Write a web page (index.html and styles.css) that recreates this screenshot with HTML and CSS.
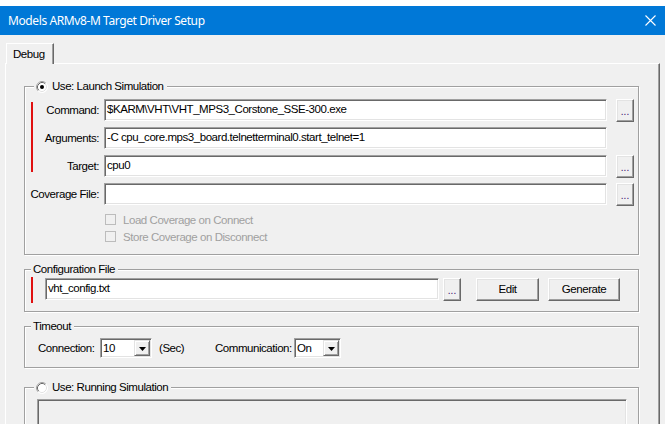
FILE: index.html
```html
<!DOCTYPE html>
<html>
<head>
<meta charset="utf-8">
<title>Models ARMv8-M Target Driver Setup</title>
<link rel="stylesheet" href="styles.css">
</head>
<body>
<div class="window">
  <div class="titlebar">
    <span class="title">Models ARMv8-M Target Driver Setup</span>
    <svg class="close" width="11" height="11" viewBox="0 0 11 11"><path d="M0.5 0.5 L10.5 10.5 M10.5 0.5 L0.5 10.5" stroke="#fff" stroke-width="1.1" fill="none"/></svg>
  </div>
  <div class="client">
    <div class="tabs"><div class="tab">Debug</div></div>
    <div class="page">
      <div class="group g-launch">
        <div class="legend legend-radio">
          <svg class="radio" width="12" height="12" viewBox="0 0 12 12">
            <circle cx="6" cy="6" r="5.5" fill="#fff"/>
            <path d="M2.11 9.89 A5.5 5.5 0 0 1 9.89 2.11" stroke="#a0a0a0" fill="none"/>
            <path d="M9.89 2.11 A5.5 5.5 0 0 1 2.11 9.89" stroke="#fff" fill="none"/>
            <path d="M2.82 9.18 A4.5 4.5 0 0 1 9.18 2.82" stroke="#696969" fill="none"/>
            <path d="M9.18 2.82 A4.5 4.5 0 0 1 2.82 9.18" stroke="#e3e3e3" fill="none"/>
            <circle cx="6" cy="6" r="2" fill="#000"/>
          </svg>
          <span>Use: Launch Simulation</span>
        </div>
        <div class="form">
          <span class="marker marker-rows"></span>
          <span class="lbl r1">Command:</span>
          <div class="edit r1 c2">$KARM\VHT\VHT_MPS3_Corstone_SSE-300.exe</div>
          <div class="btn3d browse r1 c3">...</div>
          <span class="lbl r2">Arguments:</span>
          <div class="edit r2 c2">-C cpu_core.mps3_board.telnetterminal0.start_telnet=1</div>
          <span class="lbl r3">Target:</span>
          <div class="edit r3 c2">cpu0</div>
          <div class="btn3d browse r3 c3">...</div>
          <span class="lbl r4">Coverage File:</span>
          <div class="edit r4 c2"></div>
          <div class="btn3d browse r4 c3">...</div>
        </div>
        <div class="checks">
          <div class="check"><span class="cbox"></span><span>Load Coverage on Connect</span></div>
          <div class="check"><span class="cbox"></span><span>Store Coverage on Disconnect</span></div>
        </div>
      </div>

      <div class="group g-config">
        <div class="legend">Configuration File</div>
        <div class="cfgrow">
          <span class="marker marker-cfg"></span>
          <div class="edit cfg-edit">vht_config.txt</div>
          <div class="btn3d browse cfg-browse">...</div>
          <div class="btn3d push edit-btn">Edit</div>
          <div class="btn3d push gen-btn">Generate</div>
        </div>
      </div>

      <div class="group g-timeout">
        <div class="legend">Timeout</div>
        <div class="trow">
          <span class="tl conn-l">Connection:</span>
          <div class="combo combo-conn">
            <span class="val">10</span>
            <span class="dd"><svg width="7" height="4" viewBox="0 0 7 4"><path d="M0 0 H7 L3.5 4 Z" fill="#000"/></svg></span>
          </div>
          <span class="tl sec-l">(Sec)</span>
          <span class="tl comm-l">Communication:</span>
          <div class="combo combo-comm">
            <span class="val">On</span>
            <span class="dd"><svg width="7" height="4" viewBox="0 0 7 4"><path d="M0 0 H7 L3.5 4 Z" fill="#000"/></svg></span>
          </div>
        </div>
      </div>

      <div class="group g-running">
        <div class="legend legend-radio">
          <svg class="radio" width="12" height="12" viewBox="0 0 12 12">
            <circle cx="6" cy="6" r="5.5" fill="#fff"/>
            <path d="M2.11 9.89 A5.5 5.5 0 0 1 9.89 2.11" stroke="#a0a0a0" fill="none"/>
            <path d="M9.89 2.11 A5.5 5.5 0 0 1 2.11 9.89" stroke="#fff" fill="none"/>
            <path d="M2.82 9.18 A4.5 4.5 0 0 1 9.18 2.82" stroke="#696969" fill="none"/>
            <path d="M9.18 2.82 A4.5 4.5 0 0 1 2.82 9.18" stroke="#e3e3e3" fill="none"/>
          </svg>
          <span>Use: Running Simulation</span>
        </div>
        <div class="sunken-box"></div>
      </div>
    </div>
  </div>
</div>
</body>
</html>
```
FILE: styles.css
```css
* { box-sizing: border-box; }
html, body { margin: 0; height: 100%; overflow: hidden; background: #fff; }
body {
  font-family: "Liberation Sans", Arial, sans-serif;
  font-size: 11.5px;
  letter-spacing: -0.45px;
  color: #000;
}
.titlebar {
  margin-top: 6px;
  height: 29px;
  background: #0078d7;
  color: #fff;
  display: flex;
  align-items: center;
  padding: 0 9px 0 8px;
  font-family: "Noto Sans", "Open Sans", sans-serif;
  font-size: 12px;
  letter-spacing: -0.4px;
}
.title { flex: 1; }
.close { display: block; }

.client {
  background: #f0f0f0;
  height: 389px;
  padding: 8px 5px 0 5px;
  overflow: hidden;
}
.tabs {
  display: flex;
  height: 20px;
  padding-left: 1px;
  position: relative;
  z-index: 1;
}
.tab {
  width: 48px;
  height: 21px;
  background: #f0f0f0;
  border-top: 1px solid #fff;
  border-left: 1px solid #fff;
  border-right: 1px solid #696969;
  box-shadow: inset -1px 0 0 #a0a0a0;
  padding: 4px 0 0 6px;
  line-height: 13px;
}
.page {
  height: 361px;
  overflow: hidden;
  border-top: 1px solid #fff;
  border-left: 1px solid #fff;
  border-right: 1px solid #696969;
  box-shadow: inset -1px 0 0 #a0a0a0;
  padding: 22px 20px 0 18px;
}

.group {
  position: relative;
  border: 1px solid #a0a0a0;
  box-shadow: inset 1px 1px 0 #fff, 1px 1px 0 #fff;
}
.legend {
  position: absolute;
  top: -7px;
  left: 6px;
  height: 13px;
  line-height: 13px;
  background: #f0f0f0;
  padding: 0 3px 0 2px;
  display: flex;
  align-items: center;
}
.legend-radio { left: 9px; }
.radio { display: block; margin-right: 4px; }

.g-launch { padding: 12px 0 9px 0; }
.form {
  display: grid;
  grid-template-columns: 70px 503px 18px;
  grid-template-rows: 22px 22px 22px 22px;
  column-gap: 9px;
  row-gap: 6px;
}
.lbl {
  grid-column: 1;
  text-align: right;
  margin-right: -4px;
  white-space: nowrap;
  align-self: center;
}
.r1 { grid-row: 1; }
.r2 { grid-row: 2; }
.r3 { grid-row: 3; }
.r4 { grid-row: 4; }
.c2 { grid-column: 2; }
.c3 { grid-column: 3; }
.marker { background: #e01010; width: 2px; display: block; }
.marker-rows {
  grid-column: 1;
  grid-row: 1 / 4;
  justify-self: start;
  margin: 3px 0 5px 6px;
}

.edit {
  background: #fff;
  height: 22px;
  border: 1px solid;
  border-color: #a0a0a0 #fff #fff #a0a0a0;
  box-shadow: inset 1px 1px 0 #696969, inset -1px -1px 0 #e3e3e3;
  padding: 0 0 0 2px;
  line-height: 19px;
  white-space: nowrap;
  overflow: hidden;
}
.btn3d {
  background: #f0f0f0;
  border: 1px solid;
  border-color: #fff #696969 #696969 #fff;
  box-shadow: inset -1px -1px 0 #a0a0a0, inset 1px 1px 0 #e3e3e3;
  text-align: center;
}
.browse {
  width: 18px;
  height: 23px;
  line-height: 23px;
  font-size: 10px;
  letter-spacing: 0;
  color: #3a0a6a;
}

.checks { margin: 6px 0 0 80px; }
.check {
  height: 17px;
  display: flex;
  align-items: center;
  color: #a0a0a0;
}
.cbox {
  width: 11px;
  height: 11px;
  border: 1px solid #bcbcbc;
  background: #f0f0f0;
  margin-right: 7px;
}

.g-config { margin-top: 14px; padding: 8px 0 10px 0; }
.cfgrow {
  display: flex;
  align-items: flex-start;
  height: 23px;
}
.marker-cfg { height: 26px; margin: -1px 0 0 6px; }
.cfg-edit { width: 394px; margin-left: 12px; }
.cfg-browse { margin-left: 4px; }
.push { height: 23px; line-height: 20px; }
.edit-btn { width: 63px; margin-left: 15px; }
.gen-btn { width: 72px; margin-left: 9px; }

.g-timeout { margin-top: 14px; padding: 11px 0 9px 13px; }
.trow { display: flex; align-items: center; height: 20px; }
.tl { white-space: nowrap; }
.conn-l { width: 62px; }
.sec-l { width: 56px; margin-left: 7px; }
.comm-l { width: 79px; }
.combo {
  display: flex;
  height: 20px;
  background: #fff;
  border: 1px solid;
  border-color: #a0a0a0 #fff #fff #a0a0a0;
  box-shadow: inset 1px 1px 0 #696969, inset -1px -1px 0 #e3e3e3;
  padding: 1px;
}
.combo-conn { width: 52px; }
.combo-comm { width: 47px; }
.combo .val { flex: 1; line-height: 16px; padding-left: 1px; }
.dd {
  width: 16px;
  height: 16px;
  background: #f0f0f0;
  border: 1px solid;
  border-color: #e3e3e3 #696969 #696969 #e3e3e3;
  box-shadow: inset 1px 1px 0 #fff, inset -1px -1px 0 #a0a0a0;
  display: flex;
  align-items: center;
  justify-content: center;
}
.dd svg { display: block; margin-top: 1px; }

.g-running { margin-top: 19px; padding: 11px 11px 0 12px; height: 60px; }
.sunken-box {
  height: 40px;
  border: 1px solid;
  border-color: #a0a0a0 #fff #fff #a0a0a0;
  box-shadow: inset 1px 1px 0 #696969, inset -1px -1px 0 #e3e3e3;
  background: #f0f0f0;
}
```
